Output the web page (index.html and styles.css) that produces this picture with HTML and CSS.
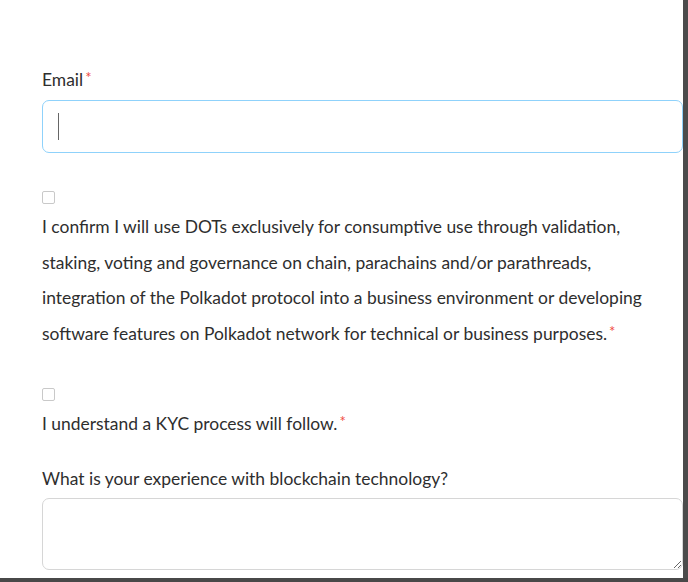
FILE: index.html
```html
<!DOCTYPE html>
<html>
<head>
<meta charset="utf-8">
<link rel="stylesheet" href="styles.css">
</head>
<body>
<div class="screen">
  <div class="modal">
    <form class="form">
      <div class="field">
        <label class="label">Email<span class="req">*</span></label>
        <div class="input focused"><span class="caret"></span></div>
      </div>
      <div class="check-field first">
        <span class="checkbox"></span>
        <p class="check-text">I confirm I will use DOTs exclusively for consumptive use through validation, staking, voting and governance on chain, parachains and/or parathreads, integration of the Polkadot protocol into a business environment or developing software features on Polkadot network for technical or business purposes.<span class="req">*</span></p>
      </div>
      <div class="check-field second">
        <span class="checkbox"></span>
        <p class="check-text">I understand a KYC process will follow.<span class="req">*</span></p>
      </div>
      <div class="field last">
        <label class="label">What is your experience with blockchain technology?</label>
        <textarea class="textarea"></textarea>
      </div>
    </form>
  </div>
  <div class="side"></div>
</div>
</body>
</html>
```
FILE: styles.css
```css
html, body {
  margin: 0;
  padding: 0;
  background: #484848;
  width: 688px;
  height: 582px;
  overflow: hidden;
}
.screen {
  display: flex;
  width: 688px;
  height: 582px;
}
.modal {
  width: 683px;
  height: 578px;
  background: #ffffff;
  overflow: hidden;
  flex: none;
}
.side {
  flex: 1;
  height: 578px;
  background: #4b4b4b;
}
.form {
  padding: 62px 0 0 42px;
  font-family: Lato, "Open Sans", sans-serif;
  font-size: 17.45px;
  color: #2e2e2e;
}
.field {
  display: flex;
  flex-direction: column;
}
.label {
  line-height: 36px;
  margin-bottom: 2px;
}
.req {
  color: #f0493e;
  font-size: 15px;
  line-height: 0;
  vertical-align: 3px;
  margin-left: 2px;
}
.input {
  box-sizing: border-box;
  width: 641px;
  height: 53px;
  border: 1px solid #8fd2fb;
  border-radius: 7px;
  display: flex;
  align-items: center;
  padding-left: 15px;
}
.caret {
  width: 1px;
  height: 27px;
  background: #666;
}
.check-field {
  display: flex;
  flex-direction: column;
  align-items: flex-start;
}
.check-field.first {
  margin-top: 38px;
}
.check-field.second {
  margin-top: 37px;
}
.checkbox {
  box-sizing: border-box;
  width: 13px;
  height: 13px;
  border: 1px solid #c9c9c9;
  border-radius: 2px;
  background: #fff;
}
.check-text {
  margin: 5px 0 0 0;
  line-height: 35.6px;
  width: 630px;
}
.field.last {
  margin-top: 19px;
}
.field.last .label {
  margin-bottom: 1px;
}
.textarea {
  box-sizing: border-box;
  width: 641px;
  height: 72px;
  border: 1px solid #d6d6d6;
  border-radius: 7px;
  margin: 0;
  padding: 8px;
  font-family: Lato, sans-serif;
  outline: none;
}
```
